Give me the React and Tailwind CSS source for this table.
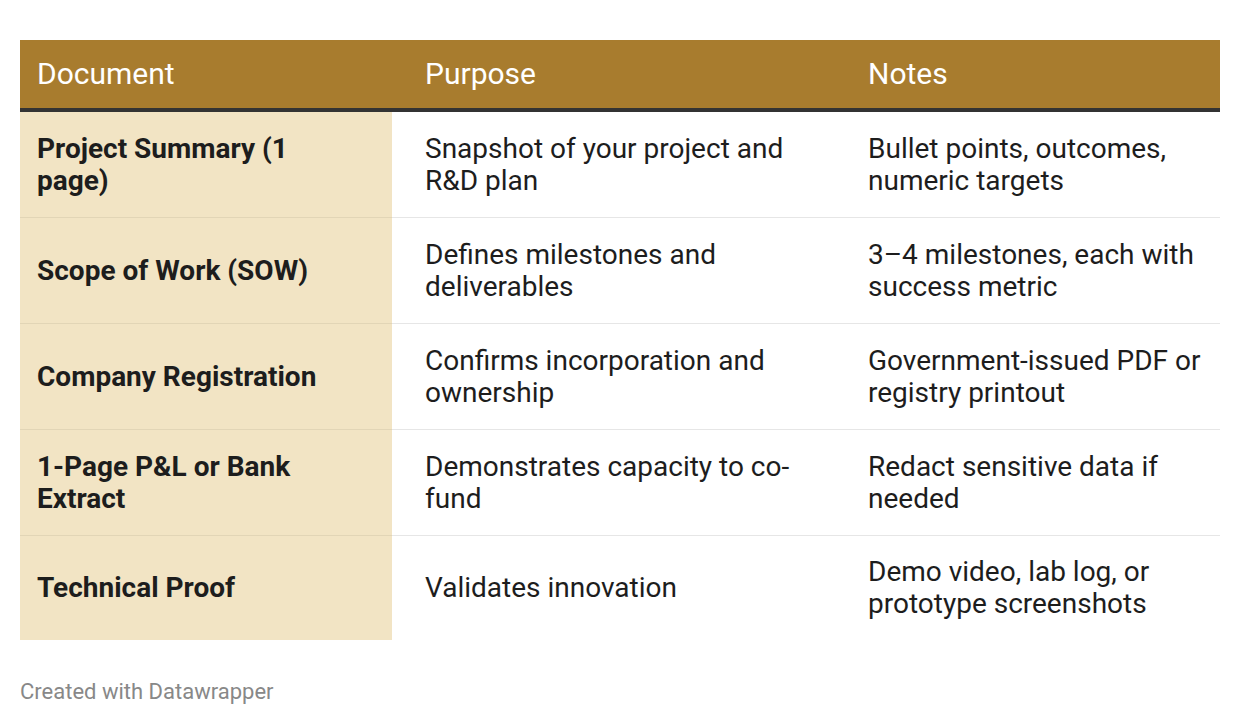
import React from 'react';

const rows = [
  ['Project Summary (1 page)', 'Snapshot of your project and R&D plan', 'Bullet points, outcomes, numeric targets'],
  ['Scope of Work (SOW)', 'Defines milestones and deliverables', '3–4 milestones, each with success metric'],
  ['Company Registration', 'Confirms incorporation and ownership', 'Government-issued PDF or registry printout'],
  ['1-Page P&L or Bank Extract', 'Demonstrates capacity to co-fund', 'Redact sensitive data if needed'],
  ['Technical Proof', 'Validates innovation', 'Demo video, lab log, or prototype screenshots'],
];

export default function App() {
  return (
    <div className="min-h-screen w-full bg-white px-5 pt-10 font-['Roboto',sans-serif] text-[28px] leading-[32px] text-[#1d1d1d]">
      {/* Header */}
      <div className="grid grid-cols-[372px_459px_369px] h-[72px] items-center bg-[#a87c2e] text-white text-[30px] border-b-4 border-[#333333]">
        <div className="pl-[17px] pr-[50px]">Document</div>
        <div className="pl-[33px] pr-[17px]">Purpose</div>
        <div className="px-[17px]">Notes</div>
      </div>

      {/* Body */}
      {rows.map((r, i) => (
        <div key={i} className={`grid grid-cols-[372px_459px_369px] ${i < rows.length - 1 ? 'h-[106px]' : 'h-[104px]'}`}>
          <div className={`flex items-center bg-[#f2e4c4] pl-[17px] pr-[50px] font-bold ${i < rows.length - 1 ? 'border-b border-[#e2d5b6]' : ''}`}>
            {r[0]}
          </div>
          <div className={`flex items-center pl-[33px] pr-[17px] ${i < rows.length - 1 ? 'border-b border-[#e6e6e6]' : ''}`}>
            {r[1]}
          </div>
          <div className={`flex items-center px-[17px] ${i < rows.length - 1 ? 'border-b border-[#e6e6e6]' : ''}`}>
            {r[2]}
          </div>
        </div>
      ))}

      <div className="mt-[39px] text-[22px] leading-[26px] text-[#888888]">Created with Datawrapper</div>
    </div>
  );
}
